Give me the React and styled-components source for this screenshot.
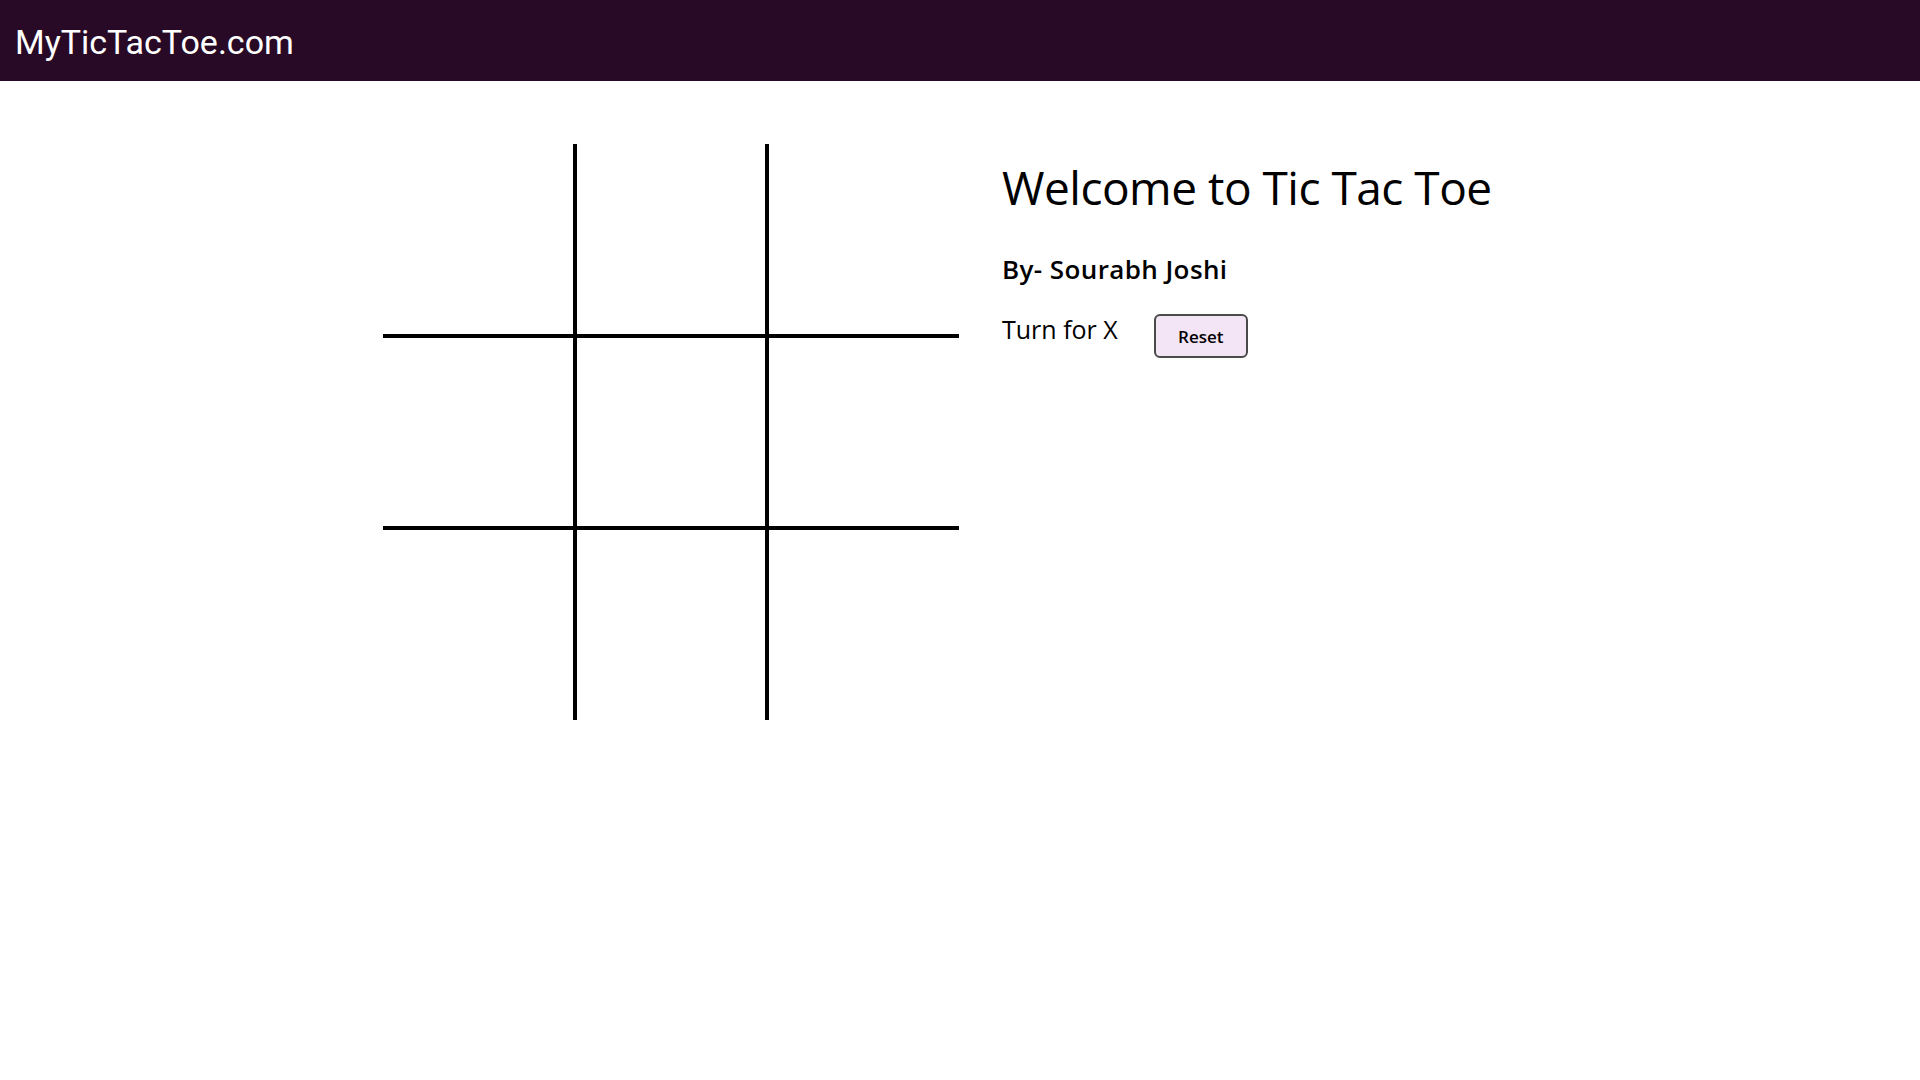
import React, { useState } from "react";
import styled, { createGlobalStyle } from "styled-components";

const GlobalStyle = createGlobalStyle`
  * {
    box-sizing: border-box;
  }
  body {
    margin: 0;
    background: #fff;
    font-family: "Open Sans", "Noto Sans", sans-serif;
  }
`;

const App = () => {
  const [board, setBoard] = useState(Array(9).fill(""));
  const [turn, setTurn] = useState("X");

  const play = (i) => {
    if (board[i]) return;
    const next = [...board];
    next[i] = turn;
    setBoard(next);
    setTurn(turn === "X" ? "O" : "X");
  };

  const reset = () => {
    setBoard(Array(9).fill(""));
    setTurn("X");
  };

  return (
    <>
      <GlobalStyle />
      <Nav>
        <Brand>MyTicTacToe.com</Brand>
      </Nav>
      <Main>
        <Board>
          {board.map((val, i) => (
            <Box
              key={i}
              $row={Math.floor(i / 3)}
              $col={i % 3}
              onClick={() => play(i)}
            >
              {val}
            </Box>
          ))}
        </Board>
        <Info>
          <Title>Welcome to Tic Tac Toe</Title>
          <Author>By- Sourabh Joshi</Author>
          <TurnRow>
            <TurnText>Turn for {turn}</TurnText>
            <ResetButton onClick={reset}>Reset</ResetButton>
          </TurnRow>
        </Info>
      </Main>
    </>
  );
};

export default App;

const Nav = styled.nav`
  height: 81px;
  background: #290a26;
  display: flex;
  align-items: center;
  padding-left: 15px;
`;

const Brand = styled.div`
  color: #fff;
  font-family: Roboto, "Liberation Sans", sans-serif;
  font-size: 34px;
  font-weight: 400;
  margin-top: 2px;
`;

const Main = styled.main`
  display: flex;
  justify-content: center;
  align-items: flex-start;
  gap: 43px;
  padding-top: 63px;
`;

const Board = styled.div`
  display: grid;
  grid-template-columns: repeat(3, 192px);
  grid-template-rows: repeat(3, 192px);
`;

const Box = styled.div`
  border-style: solid;
  border-color: #000;
  border-width: ${({ $row, $col }) =>
    `${$row > 0 ? 2 : 0}px ${$col < 2 ? 2 : 0}px ${$row < 2 ? 2 : 0}px ${
      $col > 0 ? 2 : 0
    }px`};
  display: flex;
  align-items: center;
  justify-content: center;
  font-size: 96px;
  cursor: pointer;
`;

const Info = styled.div`
  width: 535px;
  display: flex;
  flex-direction: column;
`;

const Title = styled.h1`
  margin: 0;
  margin-top: 16px;
  font-size: 46px;
  font-weight: 500;
  color: #000;
  letter-spacing: -0.5px;
  line-height: 1.2;
`;

const Author = styled.h3`
  margin: 0;
  margin-top: 39px;
  font-size: 26px;
  font-weight: 600;
  letter-spacing: 0.4px;
  color: #000;
  line-height: 1.2;
`;

const TurnRow = styled.div`
  display: flex;
  align-items: flex-start;
  gap: 36px;
  margin-top: 30px;
`;

const TurnText = styled.span`
  font-size: 25px;
  font-weight: 400;
  color: #000;
  line-height: 1.15;
`;

const ResetButton = styled.button`
  width: 94px;
  height: 44px;
  margin-top: -1px;
  background: #f3e5f5;
  border: 2px solid #4a4a4a;
  border-radius: 6px;
  font-family: "Open Sans", "Noto Sans", sans-serif;
  font-size: 17px;
  font-weight: 600;
  color: #000;
  cursor: pointer;
`;
